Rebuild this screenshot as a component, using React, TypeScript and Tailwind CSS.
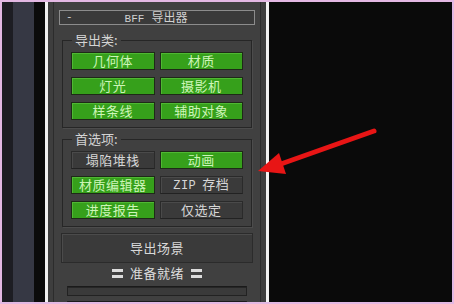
import React from "react";

const cjk = '"Noto Sans CJK SC", "Noto Sans", sans-serif';
const mono = '"Liberation Mono", monospace';

type Btn = { label: string; on: boolean };

const exportTypes: Btn[] = [
  { label: "几何体", on: true },
  { label: "材质", on: true },
  { label: "灯光", on: true },
  { label: "摄影机", on: true },
  { label: "样条线", on: true },
  { label: "辅助对象", on: true },
];

const prefs: Btn[] = [
  { label: "塌陷堆栈", on: false },
  { label: "动画", on: true },
  { label: "材质编辑器", on: true },
  { label: "ZIP 存档", on: false },
  { label: "进度报告", on: true },
  { label: "仅选定", on: false },
];

const ToggleButton: React.FC<Btn> = ({ label, on }) => (
  <div
    className={
      on
        ? "h-[18px] flex items-center justify-center bg-[#36a01b] border border-[#1e2a17] shadow-[inset_1px_1px_0_#4fb833] text-[#cdf5b8] text-[13px] tracking-[0.5px]"
        : "h-[18px] flex items-center justify-center bg-[#3a3a3a] border border-[#2a2a2a] border-b-[#222] shadow-[inset_1px_1px_0_#4a4a4a] text-[#d6d6d6] text-[13px] tracking-[0.5px]"
    }
  >
    <span className="leading-[16px]">
      {label.startsWith("ZIP") ? (
        <>
          <span style={{ fontFamily: mono }} className="text-[12px] mr-[6px]">
            ZIP
          </span>
          存档
        </>
      ) : (
        label
      )}
    </span>
  </div>
);

const Group: React.FC<{ title: string; items: Btn[] }> = ({ title, items }) => (
  <fieldset className="mx-[8px] border border-[#262626] shadow-[1px_1px_0_#4c4c4c] px-[8px] pt-[5px] pb-[7px]">
    <legend className="ml-[1px] px-[3px] text-[13px] leading-[14px] text-[#d4d4d4]">{title}</legend>
    <div className="grid grid-cols-2 gap-x-[5px] gap-y-[7px]">
      {items.map((b) => (
        <ToggleButton key={b.label} {...b} />
      ))}
    </div>
  </fieldset>
);

const Bars = () => (
  <span className="inline-flex flex-col gap-[3px]">
    <span className="block w-[11px] h-[3px] bg-[#dcdcdc]" />
    <span className="block w-[11px] h-[3px] bg-[#dcdcdc]" />
  </span>
);

export default function App() {
  return (
    <div
      className="relative w-[454px] h-[304px] border-2 border-[#e3b8e3] flex overflow-hidden bg-[#0a0a0a]"
      style={{ fontFamily: cjk }}
    >
      <div className="w-[11px] bg-[#1d1d23]" />
      <div className="w-[21px] bg-[#363844]" />
      <div className="w-[11px] bg-[#0b0b0b]" />
      <div className="w-[3px] bg-[#f2f2f2]" />

      {/* rollout panel */}
      <div className="w-[218px] bg-[#3e3e3e] px-[5px]">
        <div className="h-full border-x border-[#2c2c2c] bg-[#404040] pt-[8px]">
          <div className="mx-[5px] h-[15px] border border-[#8c8c8c] bg-[#3a3a3a] flex items-center text-[#d0d0d0]">
            <span className="w-[20px] pl-[6px] text-[11px]" style={{ fontFamily: mono }}>
              -
            </span>
            <span className="flex-1 mr-[22px] text-center text-[12px] leading-[13px]">
              <span style={{ fontFamily: mono }} className="mr-[7px] text-[11px]">
                BFF
              </span>
              导出器
            </span>
          </div>

          <div className="mt-[8px]">
            <Group title="导出类:" items={exportTypes} />
          </div>
          <div className="mt-[4px]">
            <Group title="首选项:" items={prefs} />
          </div>

          <div className="mx-[7px] mt-[6px] h-[30px] flex items-center justify-center bg-[#3a3a3a] border border-[#2b2b2b] shadow-[inset_1px_1px_0_#4b4b4b] text-[#d8d8d8] text-[13px] tracking-[0.5px]">
            导出场景
          </div>

          <div className="mt-[3px] h-[14px] flex items-center justify-center gap-[7px] text-[13px] text-[#dcdcdc] tracking-[0.5px]">
            <Bars />
            <span className="leading-[14px]">准备就绪</span>
            <Bars />
          </div>

          <div className="mx-[13px] mt-[6px] h-[10px] border border-[#222] border-t-[#1a1a1a] bg-[#3a3a3a] shadow-[inset_0_1px_0_#262626]" />
          <div className="mx-[13px] mt-[5px] h-[10px] border border-[#222] border-t-[#1a1a1a] bg-[#3a3a3a]" />
        </div>
      </div>

      <div className="w-[3px] bg-[#f2f2f2]" />
      <div className="flex-1 bg-[#0a0a0a]" />

      {/* red annotation arrow */}
      <svg className="absolute left-[-2px] top-[-2px]" width="454" height="304" viewBox="0 0 454 304">
        <line x1="374" y1="131" x2="278" y2="165" stroke="#e81515" strokeWidth="5" strokeLinecap="round" />
        <polygon points="258,171 279,153 286,174" fill="#e81515" />
      </svg>
    </div>
  );
}
